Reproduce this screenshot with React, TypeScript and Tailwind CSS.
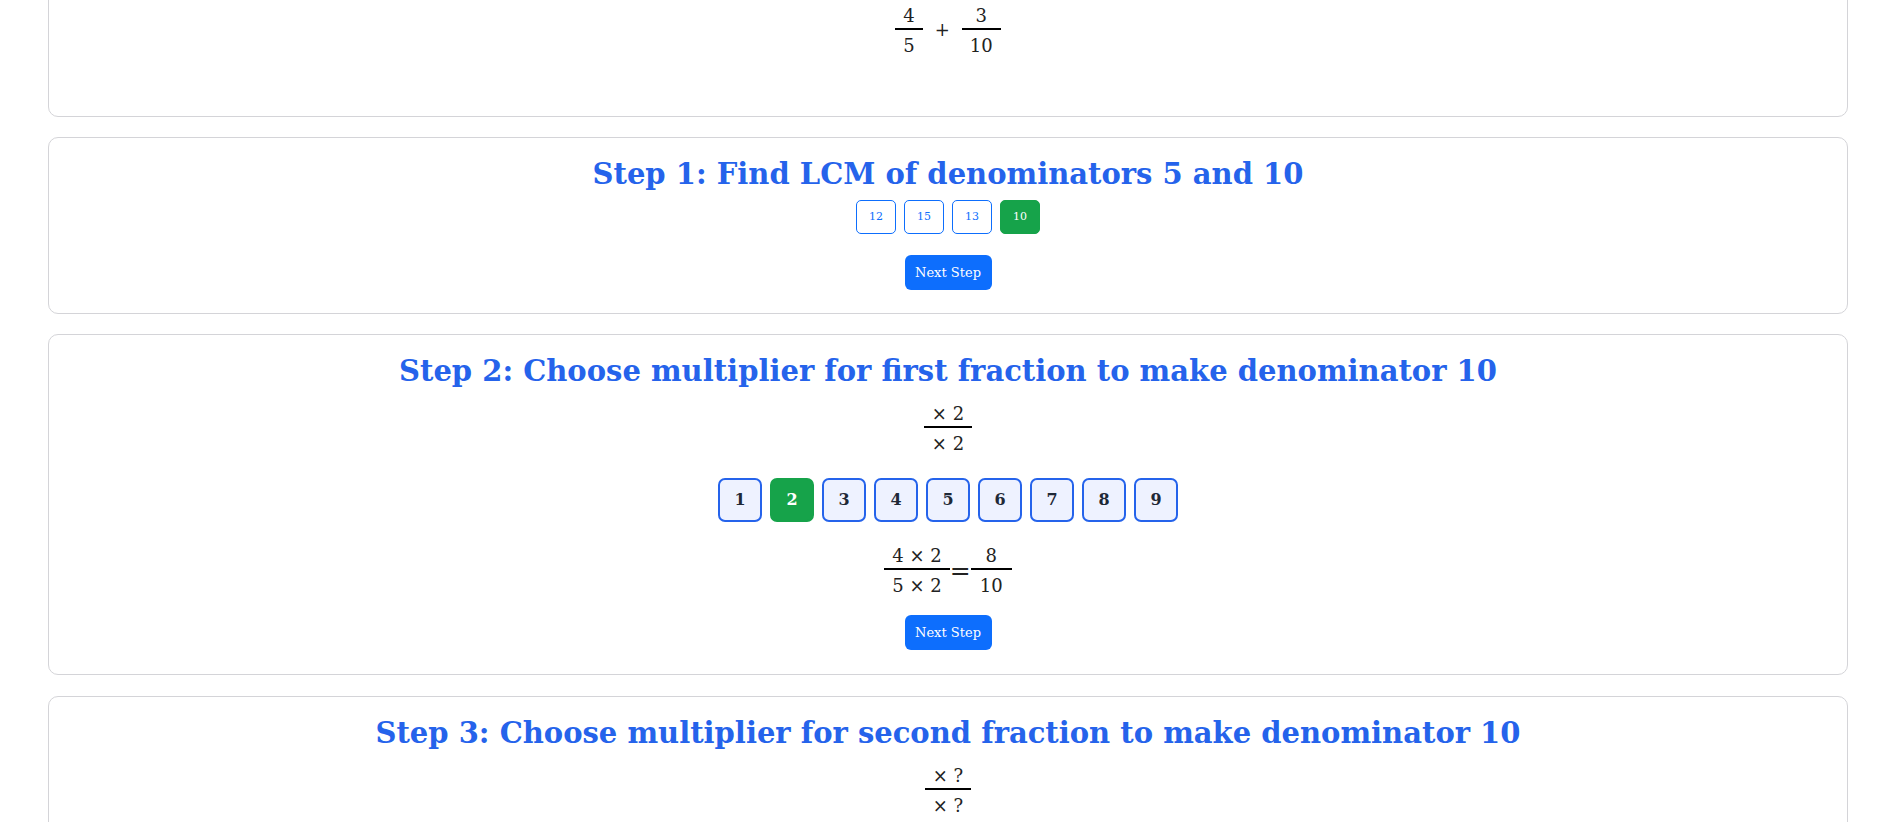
import React from "react";

const serif = { fontFamily: '"DejaVu Serif", "Liberation Serif", serif' };

type FracProps = { top: React.ReactNode; bottom: React.ReactNode; pad?: string };

const Frac = ({ top, bottom, pad = "px-2" }: FracProps) => (
  <span className="inline-flex flex-col items-center text-[18px] text-[#222]">
    <span className={`${pad} leading-[24px] whitespace-pre`}>{top}</span>
    <span className="h-[2px] w-full bg-black" />
    <span className={`${pad} pt-[4px] leading-[24px] whitespace-pre`}>{bottom}</span>
  </span>
);

const Card = ({ children, className = "" }: { children: React.ReactNode; className?: string }) => (
  <section
    className={`flex flex-col items-center rounded-[10px] border border-[#d4d4d8] bg-white px-4 ${className}`}
  >
    {children}
  </section>
);

const Heading = ({ children }: { children: React.ReactNode }) => (
  <h2 className="mt-[17px] text-center text-[29px] font-bold leading-[38px] text-[#2563eb]">
    {children}
  </h2>
);

const NextButton = () => (
  <button className="flex h-[35px] w-[87px] items-center justify-center rounded-[6px] bg-[#0d6efd] text-[13px] text-white">
    Next Step
  </button>
);

const lcmOptions = [12, 15, 13, 10];
const multipliers = [1, 2, 3, 4, 5, 6, 7, 8, 9];

export default function App() {
  return (
    <div className="min-h-screen overflow-hidden bg-white px-12" style={serif}>
      {/* problem card, scrolled partly out of view */}
      <Card className="-mt-[41px] pt-[44px] pb-[58px]">
        <div className="flex items-start">
          <Frac top="4" bottom="5" />
          <span className="mx-3 mt-[14px] text-[18px] leading-[24px] text-[#222]">+</span>
          <Frac top="3" bottom="10" />
        </div>
      </Card>

      {/* step 1 */}
      <Card className="mt-[20px] pb-[23px]">
        <Heading>Step 1: Find LCM of denominators 5 and 10</Heading>
        <div className="mt-[7px] flex gap-2">
          {lcmOptions.map((n) => (
            <button
              key={n}
              className={
                n === 10
                  ? "h-[34px] rounded-[5px] border border-[#16a34a] bg-[#16a34a] px-3 text-[11px] text-white"
                  : "h-[34px] rounded-[5px] border border-[#0d6efd] bg-white px-3 text-[11px] text-[#0d6efd]"
              }
            >
              {n}
            </button>
          ))}
        </div>
        <div className="mt-[21px]">
          <NextButton />
        </div>
      </Card>

      {/* step 2 */}
      <Card className="mt-[20px] pb-[24px]">
        <Heading>Step 2: Choose multiplier for first fraction to make denominator 10</Heading>
        <div className="mt-[12px]">
          <Frac top="× 2" bottom="× 2" />
        </div>
        <div className="mt-[22px] flex gap-2">
          {multipliers.map((n) => (
            <button
              key={n}
              className={
                n === 2
                  ? "flex h-[44px] w-[44px] items-center justify-center rounded-[7px] border-2 border-[#16a34a] bg-[#16a34a] text-[16px] font-bold text-white"
                  : "flex h-[44px] w-[44px] items-center justify-center rounded-[7px] border-2 border-[#2563eb] bg-[#eef2ff] text-[16px] font-bold text-[#1f2937]"
              }
            >
              {n}
            </button>
          ))}
        </div>
        <div className="mt-[22px] flex items-center">
          <Frac top="4 × 2" bottom="5 × 2" />
          <span className="text-[25px] leading-[24px] text-[#222]">=</span>
          <Frac top="8" bottom="10" pad="px-[9px]" />
        </div>
        <div className="mt-[17px]">
          <NextButton />
        </div>
      </Card>

      {/* step 3 */}
      <Card className="mt-[21px] pb-[40px]">
        <Heading>Step 3: Choose multiplier for second fraction to make denominator 10</Heading>
        <div className="mt-[12px]">
          <Frac top="× ?" bottom="× ?" />
        </div>
      </Card>
    </div>
  );
}
